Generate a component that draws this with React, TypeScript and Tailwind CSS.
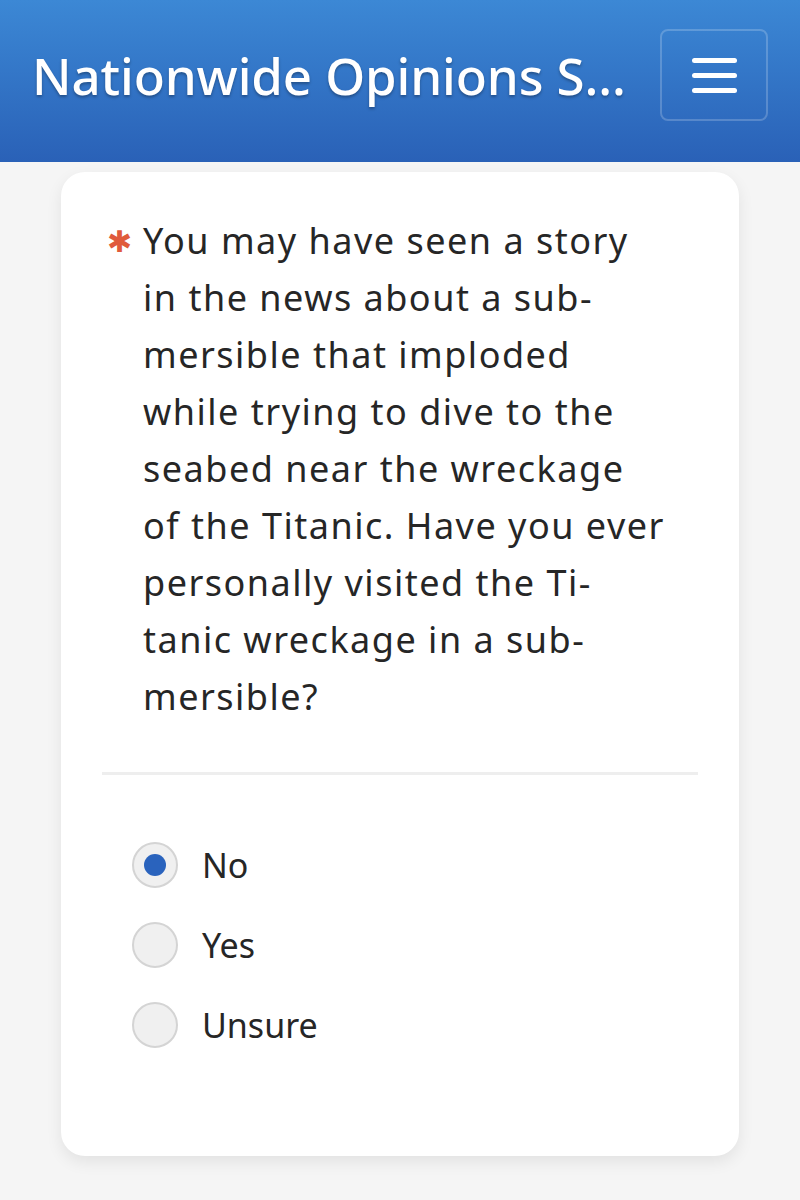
import React, { useState } from 'react';

const lines = [
  'You may have seen a story',
  'in the news about a sub-',
  'mersible that imploded',
  'while trying to dive to the',
  'seabed near the wreckage',
  'of the Titanic. Have you ever',
  'personally visited the Ti-',
  'tanic wreckage in a sub-',
  'mersible?',
];

const options = ['No', 'Yes', 'Unsure'];

export default function App() {
  const [answer, setAnswer] = useState('No');

  return (
    <div className="min-h-[1200px] bg-[#f5f5f5] font-['Noto_Sans',sans-serif] text-[#262626]">
      <header className="h-[162px] bg-gradient-to-b from-[#3c88d5] to-[#2a61b7] flex items-center justify-between pl-[32px] pr-[32px] pb-[12px]">
        <h1 className="text-white text-[51px] font-medium whitespace-nowrap tracking-[-0.1px] [text-shadow:0_2px_3px_rgba(0,0,0,0.3)]">
          Nationwide Opinions S...
        </h1>
        <button className="w-[108px] h-[92px] border-2 border-white/20 rounded-[8px] flex flex-col items-center justify-center gap-[10px]">
          <span className="block w-[45px] h-[5px] bg-white rounded-full" />
          <span className="block w-[45px] h-[5px] bg-white rounded-full" />
          <span className="block w-[45px] h-[5px] bg-white rounded-full" />
        </button>
      </header>

      <main className="px-[61px] pt-[10px] pb-[40px]">
        <div className="bg-white rounded-[24px] shadow-[0_6px_16px_rgba(0,0,0,0.08)] px-[41px] pt-[40px] pb-[108px]">
          <div className="flex">
            <span className="w-[41px] shrink-0 pl-[5px] text-[#e05a3c] text-[30px] leading-[57px]">✱</span>
            <p className="text-[36px] leading-[57px] tracking-[1.5px]">
              {lines.map(l => (
                <span key={l} className="block whitespace-nowrap">{l}</span>
              ))}
            </p>
          </div>

          <div className="mt-[47px] h-[3px] bg-[#eeeeee]" />

          <div className="pt-[67px] pl-[30px] flex flex-col gap-[34px]">
            {options.map(o => (
              <label key={o} className="flex items-center gap-[24px] cursor-pointer" onClick={() => setAnswer(o)}>
                <span className="w-[46px] h-[46px] rounded-full bg-[#f0f0f0] border-2 border-[#d4d4d4] flex items-center justify-center">
                  {answer === o && <span className="w-[22px] h-[22px] rounded-full bg-[#2a63bd]" />}
                </span>
                <span className="text-[34px] leading-[46px]">{o}</span>
              </label>
            ))}
          </div>
        </div>
      </main>
    </div>
  );
}
